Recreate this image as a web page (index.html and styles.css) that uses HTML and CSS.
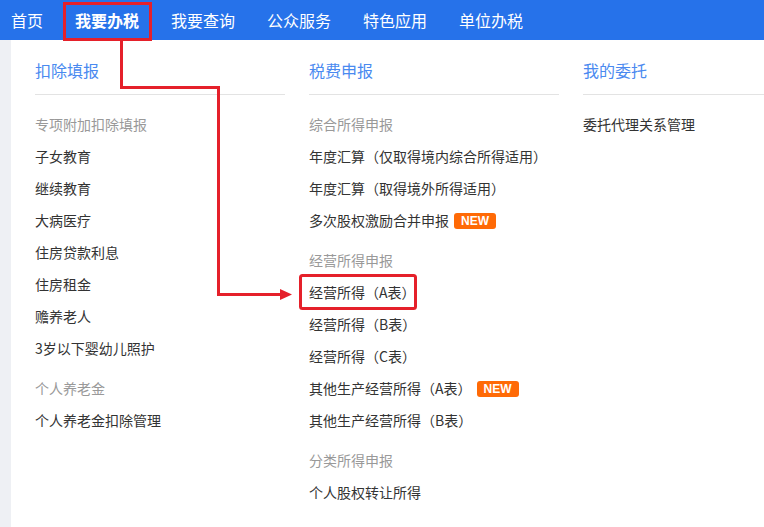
FILE: index.html
```html
<!DOCTYPE html>
<html lang="zh-CN">
<head>
  <meta charset="UTF-8" />
  <title>我要办税</title>
  <link rel="stylesheet" href="styles.css">
</head>
<body>

  <!-- 顶部导航 -->
  <div class="nav">
    <a href="#">首页</a>
    <a href="#" class="active">我要办税</a>
    <a href="#">我要查询</a>
    <a href="#">公众服务</a>
    <a href="#">特色应用</a>
    <a href="#">单位办税</a>
  </div>

  <!-- 下拉菜单 -->
  <div class="main">
    <div class="side"></div>
    <div class="panel">

      <div class="col">
        <h3>扣除填报</h3>
        <ul class="menu">
          <li class="group">专项附加扣除填报</li>
          <li>子女教育</li>
          <li>继续教育</li>
          <li>大病医疗</li>
          <li>住房贷款利息</li>
          <li>住房租金</li>
          <li>赡养老人</li>
          <li>3岁以下婴幼儿照护</li>
          <li class="group spaced">个人养老金</li>
          <li>个人养老金扣除管理</li>
        </ul>
      </div>

      <div class="col">
        <h3>税费申报</h3>
        <ul class="menu">
          <li class="group">综合所得申报</li>
          <li>年度汇算（仅取得境内综合所得适用）</li>
          <li>年度汇算（取得境外所得适用）</li>
          <li>多次股权激励合并申报<span class="badge">NEW</span></li>
          <li class="group spaced">经营所得申报</li>
          <li>经营所得（A表）</li>
          <li>经营所得（B表）</li>
          <li>经营所得（C表）</li>
          <li>其他生产经营所得（A表）<span class="badge">NEW</span></li>
          <li>其他生产经营所得（B表）</li>
          <li class="group spaced">分类所得申报</li>
          <li>个人股权转让所得</li>
        </ul>
      </div>

      <div class="col last">
        <h3>我的委托</h3>
        <ul class="menu">
          <li>委托代理关系管理</li>
        </ul>
      </div>

    </div>
  </div>

  <!-- 标注 -->
  <svg class="marks" width="764" height="527" viewBox="0 0 764 527">
    <rect x="64.5" y="3.5" width="86" height="36" fill="none" stroke="#e5202a" stroke-width="3" />
    <polyline points="121.5,41 121.5,87.5 218.5,87.5 218.5,294.5 283,294.5" fill="none" stroke="#e5202a" stroke-width="3" />
    <polygon points="280,289 292,294.5 280,300" fill="#e5202a" />
    <rect x="300.5" y="275.5" width="115" height="33" rx="2" fill="none" stroke="#e5202a" stroke-width="3" />
  </svg>

</body>
</html>
```

FILE: styles.css
```css
body {
  margin: 0;
  width: 764px;
  height: 527px;
  overflow: hidden;
  position: relative;
  font-family: "Noto Sans CJK SC", "Noto Sans", sans-serif;
  background: #fff;
}
.nav {
  display: flex;
  align-items: center;
  gap: 32px;
  height: 40px;
  padding-left: 11px;
  background: #2672ea;
}
.nav a {
  color: #fff;
  font-size: 16px;
  line-height: 24px;
  margin-top: -1px;
  text-decoration: none;
}
.nav a.active {
  font-weight: bold;
}
.main {
  display: flex;
  height: 487px;
}
.side {
  width: 11px;
  flex: none;
  background: #eef0f4;
}
.panel {
  display: flex;
  flex: 1;
  min-width: 0;
  gap: 24px;
  padding: 18px 0 0 24px;
}
.col {
  width: 250px;
  flex: none;
}
.col.last {
  flex: 1;
  width: auto;
}
.col h3 {
  margin: 0;
  font-size: 16px;
  font-weight: normal;
  line-height: 24px;
  color: #4a8af0;
  padding-bottom: 12px;
  border-bottom: 1px solid #e3e3e3;
}
.menu {
  list-style: none;
  margin: 13px 0 0;
  padding: 0;
}
.menu li {
  font-size: 14px;
  line-height: 32px;
  height: 32px;
  color: #333;
  white-space: nowrap;
}
.menu li.group {
  color: #999;
}
.menu li.spaced {
  margin-top: 8px;
}
.badge {
  display: inline-block;
  vertical-align: middle;
  margin: -3px 0 0 5px;
  width: 42px;
  height: 16px;
  line-height: 16px;
  border-radius: 3px;
  background: #ff6a06;
  color: #fff;
  font-family: "Liberation Sans", Arial, sans-serif;
  font-size: 12px;
  font-weight: bold;
  text-align: center;
}
.marks {
  position: absolute;
  top: 0;
  left: 0;
  pointer-events: none;
}
```
